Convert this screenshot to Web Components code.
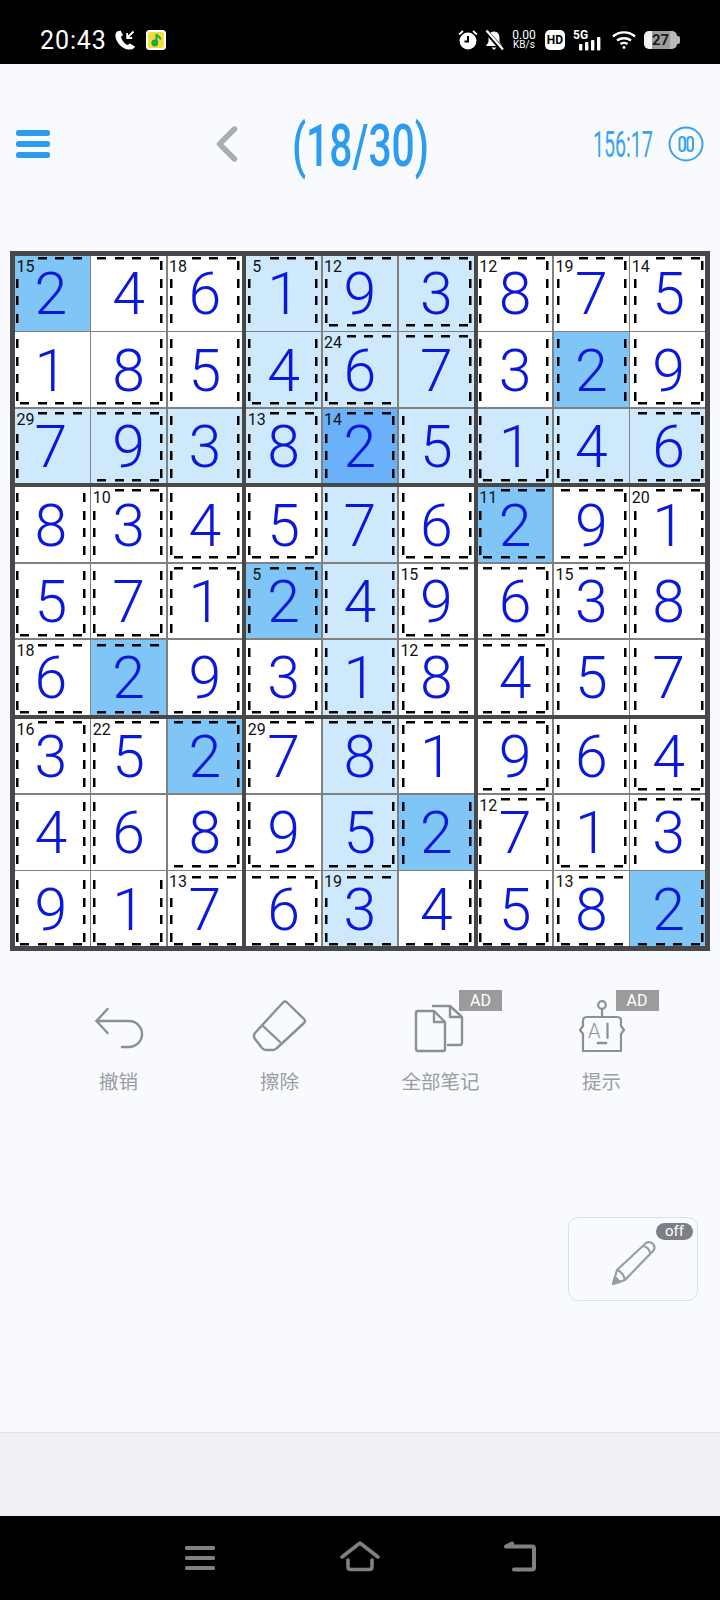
<!DOCTYPE html>
<html lang="zh">
<head>
<meta charset="utf-8">
<title>Killer Sudoku</title>
<style>
  html, body { margin: 0; padding: 0; background: #f8fafe; }
</style>
</head>
<body>
<sudoku-app></sudoku-app>
<script>
// Status bar
class StatusBar extends HTMLElement {
  constructor() {
    super();
    this.attachShadow( {mode: 'open'} ).innerHTML = `
      <style>
        :host { display: flex; box-sizing: border-box; height: 64px; background: #000; color: #fff; align-items: center; justify-content: space-between; padding: 16px 40px 0 40px; font-family: Roboto, sans-serif; }
        .group { display: flex; align-items: center; }
        .time { font-size: 25px; letter-spacing: 0.9px; width: 75px; }
        svg { display: block; }
        .speed { width: 26px; margin: 0 8px 0 7px; text-align: center; line-height: 10px; font-size: 12px; }
        .speed small { display: block; font-size: 10px; }
        .hd { width: 20px; height: 20px; border-radius: 5px; background: #fff; color: #000; font: 700 12px/20px Roboto, sans-serif; text-align: center; margin-right: 8px; }
        .battery { position: relative; width: 33px; height: 18px; border-radius: 5px; margin-left: 8px; margin-right: 3px; background: linear-gradient(90deg, #f2f2f2 0 24%, #9c9c9c 24% 78%, #b9b9b9 78%); color: #1c1c1c; font: 700 15px/18px Roboto, sans-serif; text-align: center; }
        .battery::after { content: ''; position: absolute; right: -3px; top: 5px; width: 3px; height: 8px; border-radius: 0 2px 2px 0; background: #b9b9b9; }
      </style>
      <div class="group">
        <span class="time">20:43</span>
        <svg width="20" height="20" viewBox="0 0 20 20" fill="#fff"><path d="M2 1.5 C0.5 3 0 5 0.8 8 C2 13 7 19 14 19.6 C17 19.8 19.5 18.5 20 16.5 L14.8 13.4 L12.6 15 C9.5 14 6.5 10 6 6.6 L8 5.2 L5.6 0.5 Z"/><path d="M18.5 1.5 L12.5 7.5 M12.2 3 V8 H17.2" stroke="#fff" stroke-width="1.8" fill="none"/></svg>
        <svg style="margin-left:11px" width="20" height="20" viewBox="0 0 20 20"><rect width="20" height="20" rx="3.5" fill="#fff"/><rect x="2" y="2" width="16" height="16" rx="2" fill="#f4dc3c"/><path d="M10.500 4 V13 M10.500 4.500 C12 7 14.500 6.500 14.500 9.500" stroke="#17a84a" stroke-width="2" fill="none"/><circle cx="8.800" cy="13" r="3.400" fill="#17a84a"/></svg>
      </div>
      <div class="group">
        <svg width="20" height="20" viewBox="0 0 20 20" fill="#fff"><circle cx="10" cy="11" r="8.5"/><path d="M10 6 V11.5 H6.5" stroke="#000" stroke-width="2" fill="none"/><path d="M1 4.5 L5 1 M19 4.5 L15 1" stroke="#fff" stroke-width="1.8"/></svg>
        <svg style="margin-left:6px" width="20" height="21" viewBox="0 0 20 21" fill="#fff"><path d="M10 1.5 C6 1.5 4.5 4.5 4.5 8 V12 L2 16 H18 L15.5 12 V8 C15.5 4.5 14 1.5 10 1.5 Z"/><path d="M7.5 17.5 H12.5 L10 20 Z"/><path d="M2 1 L18.5 20" stroke="#000" stroke-width="4.5"/><path d="M2.5 0.5 L19 19.5" stroke="#fff" stroke-width="2.2"/></svg>
        <div class="speed">0.00<small>KB/s</small></div>
        <div class="hd">HD</div>
        <svg width="30" height="22" viewBox="0 0 30 22" fill="#fff"><text x="0" y="10" font-family="Roboto, sans-serif" font-weight="700" font-size="12">5G</text><rect x="6" y="15" width="3.4" height="6.5" rx="1"/><rect x="12" y="13" width="3.4" height="8.5" rx="1"/><rect x="18" y="11" width="3.4" height="10.5" rx="1"/><rect x="24" y="8" width="3.4" height="13.5" rx="1"/></svg>
        <svg style="margin-left:9px" width="24" height="20" viewBox="0 0 24 20" fill="none" stroke="#fff" stroke-width="2.4"><path d="M1 6.5 C7 1 17 1 23 6.5"/><path d="M5 10.5 C9 7.5 15 7.5 19 10.5"/><path d="M8.5 14 C10.5 12.7 13.5 12.7 15.5 14"/><circle cx="12" cy="17.5" r="1.4" fill="#fff" stroke="none"/></svg>
        <div class="battery">27</div>
      </div>`;
  }
}

// Title row
class GameHeader extends HTMLElement {
  constructor() {
    super();
    this.attachShadow( {mode: 'open'} ).innerHTML = `
      <style>
        :host { display: grid; box-sizing: border-box; height: 160px; grid-template-columns: 216px 76px 301px 75px 52px; align-items: center; font-family: Roboto, sans-serif; color: #2c9cef; }
        svg { display: block; }
        .menu { margin-left: 16px; }
        .squeeze { display: block; white-space: nowrap; transform-origin: left center; }
        .title { font-size: 60px; font-weight: 500; line-height: 60px; transform: scaleX(0.68); margin-top: 3px; }
        .clock { font-size: 37px; font-weight: 400; line-height: 40px; transform: scaleX(0.53); color: #3aa2ef; margin-top: 2px; }
      </style>
      <svg class="menu" width="34" height="30" viewBox="0 0 34 30" fill="#2c9cef"><rect y="1" width="34" height="6" rx="2.5"/><rect y="12" width="34" height="6" rx="2.5"/><rect y="23" width="34" height="6" rx="2.5"/></svg>
      <svg width="24" height="36" viewBox="0 0 24 36" fill="none" stroke="#a9acb0" stroke-width="5.4" stroke-linecap="round" stroke-linejoin="round"><path d="M19 3 L4 18 L19 33" transform="translate(-0.5 0)"/></svg>
      <span class="squeeze title">(18/30)</span>
      <span class="squeeze clock">156:17</span>
      <svg width="36" height="36" viewBox="0 0 36 36" fill="none" stroke="#3aa2ef" stroke-width="2"><circle cx="18" cy="18" r="16.5"/><rect x="11.5" y="11" width="5.5" height="14" rx="2.7"/><rect x="19.5" y="11" width="5.5" height="14" rx="2.7"/></svg>`;
  }
}

// One cell of the board
class SudokuCell extends HTMLElement {
  constructor() {
    super();
    this.attachShadow( {mode: 'open'} ).innerHTML = `
      <style>
        :host { display: flex; position: relative; align-items: center; justify-content: center; min-width: 0; min-height: 0; background: #fff; font-family: Roboto, sans-serif; color: #0a18dc; }
        :host([tone="light"]) { background: #cfe9fc; }
        :host([tone="hit"]) { background: #7fc5f6; }
        :host([tone="selected"]) { background: #6bb0fb; }
        .value { font-size: 59px; font-weight: 300; line-height: 59px; margin-top: 1px; }
        :host([edge="first"]) .value { margin-right: 3px; }
        :host([edge="last"]) .value { margin-left: 2px; }
        .sum { position: absolute; left: 0; top: 1px; width: 21px; text-align: center; font-size: 16px; line-height: 20px; color: #111; }
      </style>
      <span class="value"></span>
      <span class="sum"></span>`;
  }

  connectedCallback() {
    this.shadowRoot.querySelector( '.value' ).textContent = this.getAttribute( 'value' );
    this.shadowRoot.querySelector( '.sum' ).textContent = this.getAttribute( 'sum' ) || '';
  }
}

// digit, cage sides, cage sum
const CELLS = [
  ['2','TL','15'],['4','TR'],['6','TLR','18'],['1','TLR','5'],['9','TLB','12'],['3','TRB'],['8','TLR','12'],['7','TLR','19'],['5','TLR','14'],
  ['1','LB'],['8','RB'],['5','LR'],['4','LRB'],['6','TLB','24'],['7','TR'],['3','LR'],['2','LR'],['9','LRB'],
  ['7','TL','29'],['9','TRB'],['3','LR'],['8','TLR','13'],['2','TLR','14'],['5','LR'],['1','LRB'],['4','LB'],['6','TRB'],
  ['8','LR'],['3','TLR','10'],['4','LRB'],['5','LRB'],['7','LR'],['6','LRB'],['2','TLB','11'],['9','TRB'],['1','TLR','20'],
  ['5','LRB'],['7','LRB'],['1','TLR'],['2','TLR','5'],['4','LR'],['9','TLB','15'],['6','TRB'],['3','TLR','15'],['8','LR'],
  ['6','TLB','18'],['2','TB'],['9','RB'],['3','LRB'],['1','LRB'],['8','TLB','12'],['4','TRB'],['5','LR'],['7','LR'],
  ['3','TLR','16'],['5','TL','22'],['2','TR'],['7','TL','29'],['8','TR'],['1','TL'],['9','TRB'],['6','LR'],['4','LRB'],
  ['4','LR'],['6','L'],['8','RB'],['9','LB'],['5','RB'],['2','LR'],['7','TLR','12'],['1','LRB'],['3','TLR'],
  ['9','LRB'],['1','LRB'],['7','TLB','13'],['6','TRB'],['3','TLB','19'],['4','RB'],['5','LRB'],['8','TLB','13'],['2','RB']
];

class SudokuBoard extends HTMLElement {
  constructor() {
    super();
    this.attachShadow( {mode: 'open'} ).innerHTML = `
      <style>
        :host { display: block; position: relative; box-sizing: border-box; width: 700px; height: 700px; margin: 0 10px; padding: 5px; background: #484848; }
        .boxes { display: grid; width: 100%; height: 100%; grid-template: repeat(3, 1fr) / repeat(3, 1fr); gap: 4px; }
        .box { display: grid; grid-template: repeat(3, 1fr) / repeat(3, 1fr); gap: 1.5px; background: #808080; min-width: 0; min-height: 0; }
        svg { position: absolute; left: 0; top: 0; pointer-events: none; }
      </style>
      <div class="boxes"></div>
      <svg width="700" height="700" fill="#000"></svg>`;

    const boxes = this.shadowRoot.querySelector( '.boxes' );
    const groups = [];

    for( let b = 0; b < 9; b++ ) {
      const box = document.createElement( 'div' );
      box.className = 'box';
      boxes.appendChild( box );
      groups.push( box );
    }

    let dashes = '';

    CELLS.forEach( ( [value, sides, sum], i ) => {
      const row = Math.floor( i / 9 );
      const col = i % 9;
      const cell = document.createElement( 'sudoku-cell' );
      cell.setAttribute( 'value', value );
      if( sum ) cell.setAttribute( 'sum', sum );
      if( col === 0 ) cell.setAttribute( 'edge', 'first' );
      if( col === 8 ) cell.setAttribute( 'edge', 'last' );
      cell.setAttribute( 'tone', this.tone( row, col, value ) );
      groups[Math.floor( row / 3 ) * 3 + Math.floor( col / 3 )].appendChild( cell );
      dashes += this.cage( row, col, sides, !!sum );
    } );

    this.shadowRoot.querySelector( 'svg' ).innerHTML = dashes;
  }

  tone( row, col, value ) {
    if( row === 2 && col === 4 ) return 'selected';
    if( value === '2' ) return 'hit';
    if( row === 2 || col === 4 || ( row < 3 && col >= 3 && col < 6 ) ) return 'light';
    return 'plain';
  }

  // Cage lines keep their own pitch, a little off the cell lines
  cage( row, col, sides, hasSum ) {
    const left = Math.round( 6.7 + col * 77.3 );
    const top = Math.round( 7.3 + row * 77.3 );
    const size = 67;
    let out = '';

    for( let n = 0; n < 4; n++ ) {
      const at = Math.round( 3 + n * 17.5 );
      const skip = hasSum && n === 0;
      if( sides.includes( 'T' ) && !skip ) out += `<rect x="${left + at}" y="${top - 1}" width="9" height="2.5"/>`;
      if( sides.includes( 'B' ) ) out += `<rect x="${left + at}" y="${top + size - 1}" width="9" height="2.5"/>`;
      if( sides.includes( 'L' ) && !skip ) out += `<rect x="${left - 1}" y="${top + at}" width="2.5" height="9"/>`;
      if( sides.includes( 'R' ) ) out += `<rect x="${left + size - 1}" y="${top + at}" width="2.5" height="9"/>`;
    }

    return out;
  }
}

// Icon with a caption, and the optional AD flag
class ToolItem extends HTMLElement {
  constructor() {
    super();
    this.attachShadow( {mode: 'open'} ).innerHTML = `
      <style>
        :host { display: flex; position: relative; flex-direction: column; align-items: center; font-family: "Noto Sans CJK SC", sans-serif; color: #9a9da3; }
        .icon { display: flex; justify-content: center; height: 56px; }
        .label { margin-top: 13px; font-size: 19.5px; line-height: 28px; }
        .flag { display: none; position: absolute; top: -8px; width: 43px; height: 21px; background: #9b9b9b; color: #fff; font: 16px/21px Roboto, sans-serif; text-align: center; }
        :host([flag]) .flag { display: block; left: calc(50% + var(--flag-x, 16px)); }
      </style>
      <div class="icon"><slot name="icon"></slot></div>
      <div class="label"><slot></slot></div>
      <div class="flag">AD</div>`;
  }
}

class ToolBar extends HTMLElement {
  constructor() {
    super();
    this.attachShadow( {mode: 'open'} ).innerHTML = `
      <style>
        :host { display: grid; grid-template-columns: repeat(4, 161px); margin: 47px 0 0 38px; }
      </style>
      <slot></slot>`;
  }
}

class PencilButton extends HTMLElement {
  constructor() {
    super();
    this.attachShadow( {mode: 'open'} ).innerHTML = `
      <style>
        :host { display: flex; position: relative; box-sizing: border-box; width: 130px; height: 84px; margin: 122px 22px 0 auto; align-items: center; justify-content: center; padding-top: 7px; padding-left: 2px; border: 1.5px solid #cfe4f3; border-radius: 10px; }
        .off { position: absolute; top: 5px; right: 4px; width: 37px; height: 17px; border-radius: 9px; background: #7c8086; color: #fff; font: 15px/16px Roboto, sans-serif; text-align: center; }
        svg { display: block; }
      </style>
      <svg width="48" height="48" viewBox="0 0 48 48" fill="none" stroke="#9a9da2" stroke-width="2.2" stroke-linejoin="round"><path d="M3 45 L7 31 L36 4 Q40 2 43 5 Q46 9 43 12 L15 41 Z"/><path d="M7 31 Q13 33 15 41"/><path d="M33 7 Q39 8 40.500 15"/><path d="M3 45 L5 38 L10 43 Z" fill="#9a9da2"/></svg>
      <div class="off">off</div>`;
  }
}

// Bottom band and system navigation
class NavBar extends HTMLElement {
  constructor() {
    super();
    this.attachShadow( {mode: 'open'} ).innerHTML = `
      <style>
        :host { display: block; }
        .band { box-sizing: border-box; height: 84px; background: #f1f0f5; border-top: 1px solid #e2e2e6; }
        .nav { display: flex; box-sizing: border-box; height: 84px; background: #000; padding: 24px 0 0 183px; }
        svg { display: block; }
      </style>
      <div class="band"></div>
      <div class="nav">
        <svg width="34" height="32" viewBox="0 0 34 32" fill="#808080"><rect x="2" y="6" width="30" height="4" rx="1.500"/><rect x="2" y="16" width="30" height="4" rx="1.500"/><rect x="2" y="26" width="30" height="4" rx="1.500"/></svg>
        <svg style="margin-left:122px" width="42" height="32" viewBox="0 0 42 32" fill="none" stroke="#808080" stroke-width="3.6" stroke-linecap="round" stroke-linejoin="round"><path d="M3 17 L21 3 L39 17"/><path d="M9 20 V27 Q9 29.500 12 29.500 H30 Q33 29.500 33 27 V20"/></svg>
        <svg style="margin-left:119px" width="38" height="32" viewBox="0 0 38 32" fill="none" stroke="#808080" stroke-width="4" stroke-linecap="round" stroke-linejoin="round"><path d="M12 3.500 L6 6.500 H32 Q34 6.500 34 8.500 V27.500 Q34 29.500 32 29.500 H14"/></svg>
      </div>`;
  }
}

class SudokuApp extends HTMLElement {
  constructor() {
    super();
    this.attachShadow( {mode: 'open'} ).innerHTML = `
      <style>
        :host { display: flex; flex-direction: column; width: 720px; height: 1600px; background: #f8fafe; overflow: hidden; }
        game-header { margin-bottom: 27px; }
        nav-bar { margin-top: auto; }
        svg { display: block; }
      </style>
      <status-bar></status-bar>
      <game-header></game-header>
      <sudoku-board></sudoku-board>
      <tool-bar>
        <tool-item>
          <svg slot="icon" width="56" height="56" viewBox="0 0 56 56" fill="none" stroke="#8b9096" stroke-width="2.4" stroke-linecap="round" stroke-linejoin="round"><path d="M16.500 11 L5.500 23 L16.500 35"/><path d="M5.500 23 H38 A13 13 0 0 1 38 49 H31"/></svg>
          撤销
        </tool-item>
        <tool-item>
          <svg slot="icon" width="60" height="56" viewBox="0 0 60 56" fill="none" stroke="#8b9096" stroke-width="2.4" stroke-linejoin="round" stroke-linecap="round"><path d="M33 4.500 Q35 2.500 37 4.500 L54 21 Q56 23 54 25 L27 50 Q25 52 23 52 H16 Q14 52 12 50 L5 41 Q3 38 5 35 Z"/><path d="M13 28 L30 44"/></svg>
          擦除
        </tool-item>
        <tool-item flag style="--flag-x: 18.5px">
          <svg slot="icon" width="57" height="56" viewBox="0 0 57 56" fill="none" stroke="#8b9096" stroke-width="2.4" stroke-linejoin="round" stroke-linecap="round"><path d="M6 13 H22 L33 24 V51 Q33 53 31 53 H6 Q4 53 4 51 V15 Q4 13 6 13 Z"/><path d="M22 14 V24 H32"/><path d="M21 8 H38 L50 19 V45 Q50 47 48 47 H36"/><path d="M38 9 V19 H49"/></svg>
          全部笔记
        </tool-item>
        <tool-item flag style="--flag-x: 14px">
          <svg slot="icon" width="56" height="56" viewBox="0 0 56 56" fill="none" stroke="#8b9096" stroke-width="2.2" stroke-linejoin="round" stroke-linecap="round"><circle cx="28" cy="7" r="3.800"/><path d="M28 11 V19"/><path d="M13 19 H43 Q47 19 47 23 V28 L50 32 L47 36 V53 H9 V36 L6 32 L9 28 V23 Q9 19 13 19 Z"/><path d="M24 45 H32" stroke-width="2.6"/><text x="14" y="40" font-family="Roboto, sans-serif" font-size="20" font-weight="300" fill="#8b9096" stroke="none">A</text><path d="M33.500 25.500 V40"/></svg>
          提示
        </tool-item>
      </tool-bar>
      <pencil-button></pencil-button>
      <nav-bar></nav-bar>`;
  }
}

window.customElements.define( 'status-bar', StatusBar );
window.customElements.define( 'game-header', GameHeader );
window.customElements.define( 'sudoku-cell', SudokuCell );
window.customElements.define( 'sudoku-board', SudokuBoard );
window.customElements.define( 'tool-item', ToolItem );
window.customElements.define( 'tool-bar', ToolBar );
window.customElements.define( 'pencil-button', PencilButton );
window.customElements.define( 'nav-bar', NavBar );
window.customElements.define( 'sudoku-app', SudokuApp );
</script>
</body>
</html>
